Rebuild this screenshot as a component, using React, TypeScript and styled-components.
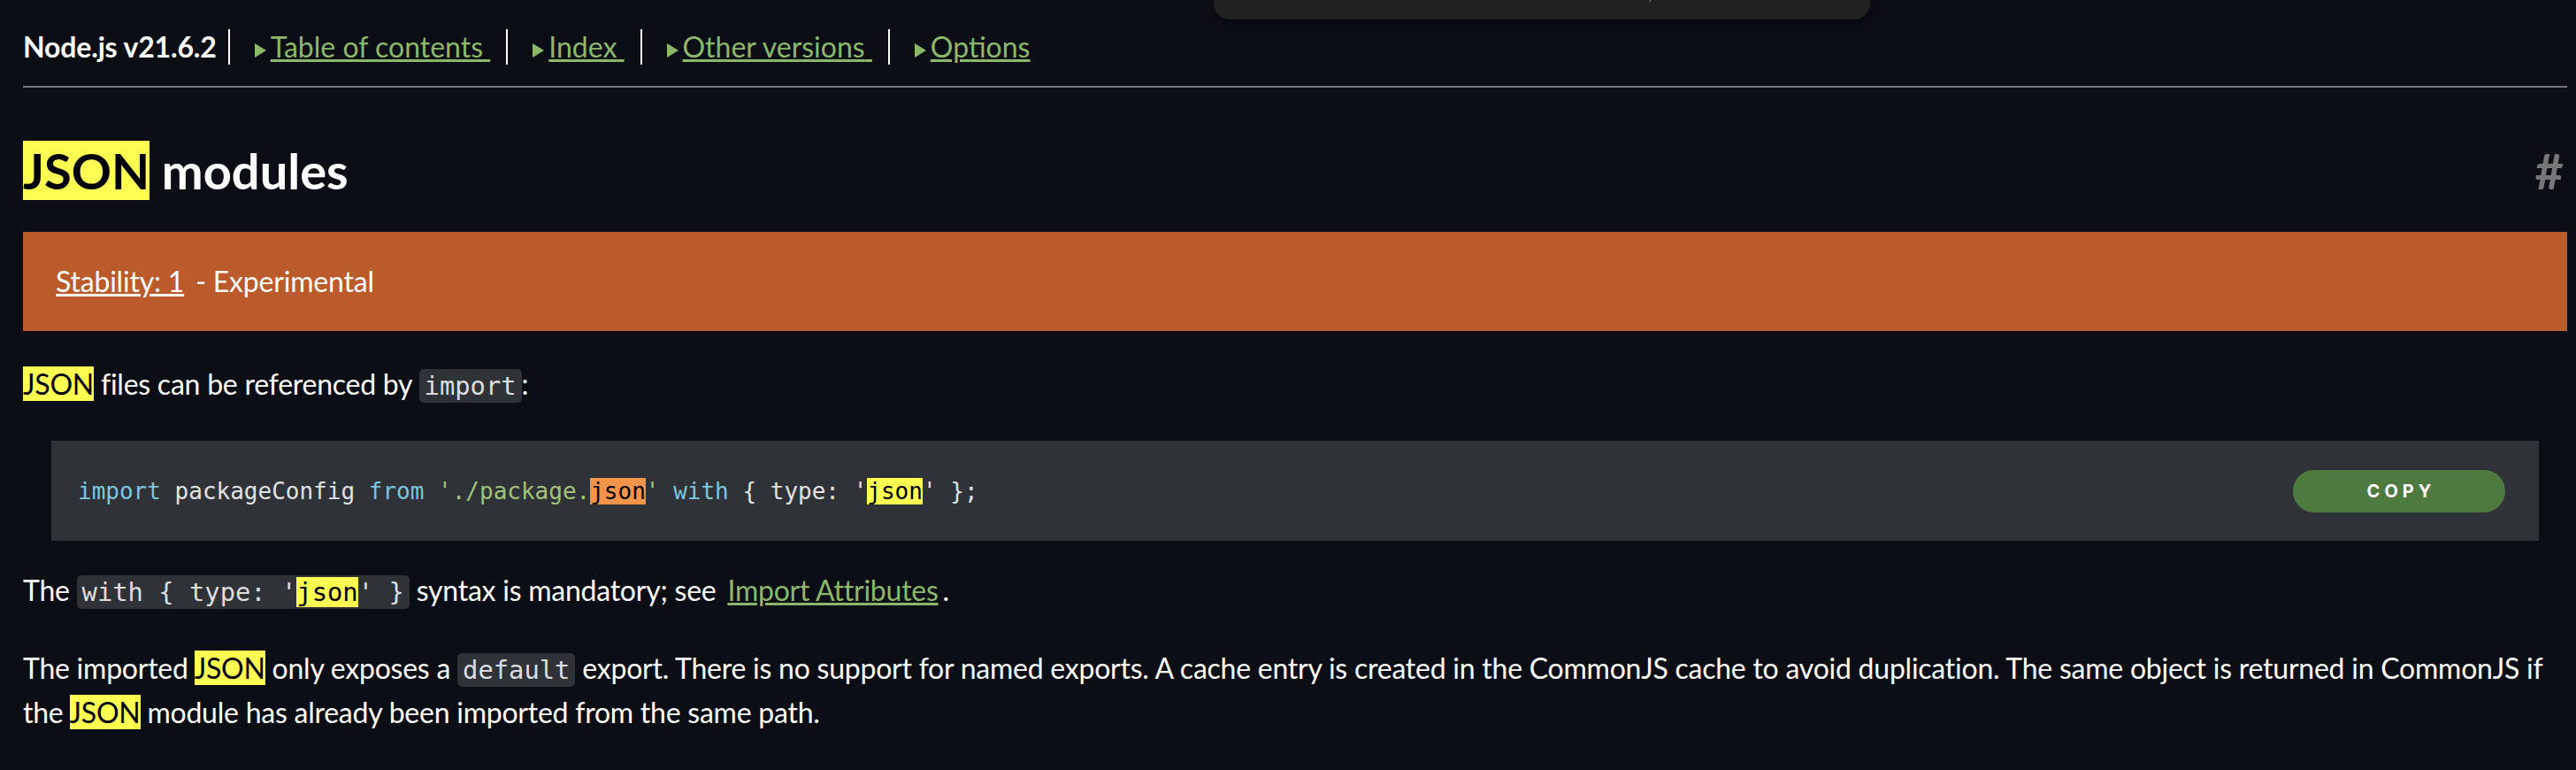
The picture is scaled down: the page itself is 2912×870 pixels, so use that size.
import React from "react";
import styled, { createGlobalStyle } from "styled-components";

const Global = createGlobalStyle`
  html, body { margin: 0; padding: 0; background: #0b0e15; }
  body {
    font-family: Lato, "Noto Sans", sans-serif;
    color: #ffffff;
    font-size: 32px;
    line-height: 48px;
  }
  * { box-sizing: border-box; }
`;

const Page = styled.div`
  position: relative;
  min-height: 870px;
  padding: 33px 10px 0 26px;
`;

const Header = styled.header`
  border-bottom: 2px solid #767676;
  padding-bottom: 24px;
`;

const NavList = styled.ul`
  display: flex;
  align-items: center;
  list-style: none;
  margin: 0;
  padding: 0;
  font-size: 32px;
  line-height: 40px;
`;

const Brand = styled.li`
  font-weight: 700;
  padding-right: 13px;
  border-right: 2px solid #ffffff;
  letter-spacing: -0.15px;
`;

const NavItem = styled.li`
  padding-left: 28px;
  &:not(:last-child) {
    padding-right: 18px;
    border-right: 2px solid #ffffff;
  }
`;

const Arrow = styled.span`
  display: inline-block;
  width: 0;
  height: 0;
  border-left: 13px solid #8cb86b;
  border-top: 8px solid transparent;
  border-bottom: 8px solid transparent;
  margin-right: 5px;
`;

const NavLink = styled.a`
  color: #8cb86b;
  text-decoration: underline;
`;

const TitleRow = styled.h1`
  display: flex;
  justify-content: space-between;
  align-items: baseline;
  margin: 60px 0 36px;
  font-size: 56px;
  line-height: 67px;
  font-weight: 700;
`;

const Anchor = styled.a`
  color: #777777;
  text-decoration: none;
  margin-right: 4px;
`;

const Mark = styled.mark<{ $active?: boolean }>`
  background: ${(p) => (p.$active ? "#f2944a" : "#fdfd52")};
  color: #000000;
`;

const Stability = styled.div`
  background: #bb5a2a;
  padding: 32px 32px;
  margin-bottom: 36px;
  letter-spacing: -0.2px;
`;

const ContentLink = styled.a<{ $light?: boolean }>`
  color: ${(p) => (p.$light ? "#ffffff" : "#8cb86b")};
  text-decoration: underline;
  padding: 0 5px;
`;

const Para = styled.p`
  margin: 0 0 38px;
  letter-spacing: -0.24px;
`;

const InlineCode = styled.code`
  font-family: "DejaVu Sans Mono", "Liberation Mono", monospace;
  font-size: 28.8px;
  letter-spacing: 0;
  padding: 2px 6px;
  border-radius: 5px;
  background: #2f3338;
  color: #dedede;
`;

const CodeBlock = styled.div`
  display: flex;
  align-items: center;
  height: 113px;
  margin: 0 32px 32px;
  padding: 0 38px 0 30px;
  background: #2f3338;
`;

const CodeLine = styled.code`
  font-family: "DejaVu Sans Mono", "Liberation Mono", monospace;
  font-size: 26px;
  line-height: 38px;
  white-space: pre;
  color: #e2e2e2;
`;

const Tok = styled.span<{ $kind: "kw" | "str" }>`
  color: ${(p) => (p.$kind === "kw" ? "#7cc6de" : "#a3c27c")};
`;

const CopyButton = styled.button`
  margin-left: auto;
  width: 240px;
  height: 48px;
  border: none;
  border-radius: 24px;
  background: #4e7a40;
  color: #ffffff;
  font-family: Inter, Roboto, sans-serif;
  font-weight: 700;
  font-size: 20px;
  letter-spacing: 5px;
  padding: 0 0 0 5px;
`;

const FindBar = styled.div`
  position: absolute;
  top: 0;
  left: 1372px;
  width: 742px;
  height: 22px;
  background: #212121;
  border-radius: 0 0 18px 18px;
  box-shadow: 0 4px 12px rgba(0, 0, 0, 0.45);
`;

const FindTick = styled.span`
  position: absolute;
  top: 0;
  left: 493px;
  width: 1px;
  height: 2px;
  background: #8a8a8a;
`;

export default function App() {
  return (
    <>
      <Global />
      <Page>
        <Header>
          <NavList>
            <Brand>Node.js v21.6.2</Brand>
            <NavItem>
              <Arrow />
              <NavLink href="#">Table of contents{"\u00a0"}</NavLink>
            </NavItem>
            <NavItem>
              <Arrow />
              <NavLink href="#">Index{"\u00a0"}</NavLink>
            </NavItem>
            <NavItem>
              <Arrow />
              <NavLink href="#">Other versions{"\u00a0"}</NavLink>
            </NavItem>
            <NavItem>
              <Arrow />
              <NavLink href="#">Options</NavLink>
            </NavItem>
          </NavList>
        </Header>

        <TitleRow>
          <span>
            <Mark>JSON</Mark> modules
          </span>
          <Anchor href="#">#</Anchor>
        </TitleRow>

        <Stability>
          <ContentLink $light href="#">Stability: 1</ContentLink> - Experimental
        </Stability>

        <Para>
          <Mark>JSON</Mark> files can be referenced by <InlineCode>import</InlineCode>:
        </Para>

        <CodeBlock>
          <CodeLine>
            <Tok $kind="kw">import</Tok> packageConfig <Tok $kind="kw">from</Tok>{" "}
            <Tok $kind="str">
              './package.<Mark $active>json</Mark>'
            </Tok>{" "}
            <Tok $kind="kw">with</Tok> {"{"} type: '<Mark>json</Mark>' {"}"};
          </CodeLine>
          <CopyButton>COPY</CopyButton>
        </CodeBlock>

        <Para>
          The <InlineCode>with {"{"} type: '<Mark>json</Mark>' {"}"}</InlineCode> syntax is mandatory; see{" "}
          <ContentLink href="#">Import Attributes</ContentLink>.
        </Para>

        <Para>
          The imported <Mark>JSON</Mark> only exposes a <InlineCode>default</InlineCode> export. There is no
          support for named exports. A cache entry is created in the CommonJS cache to avoid duplication. The
          same object is returned in CommonJS if the <Mark>JSON</Mark> module has already been imported from
          the same path.
        </Para>

        <FindBar>
          <FindTick />
        </FindBar>
      </Page>
    </>
  );
}
